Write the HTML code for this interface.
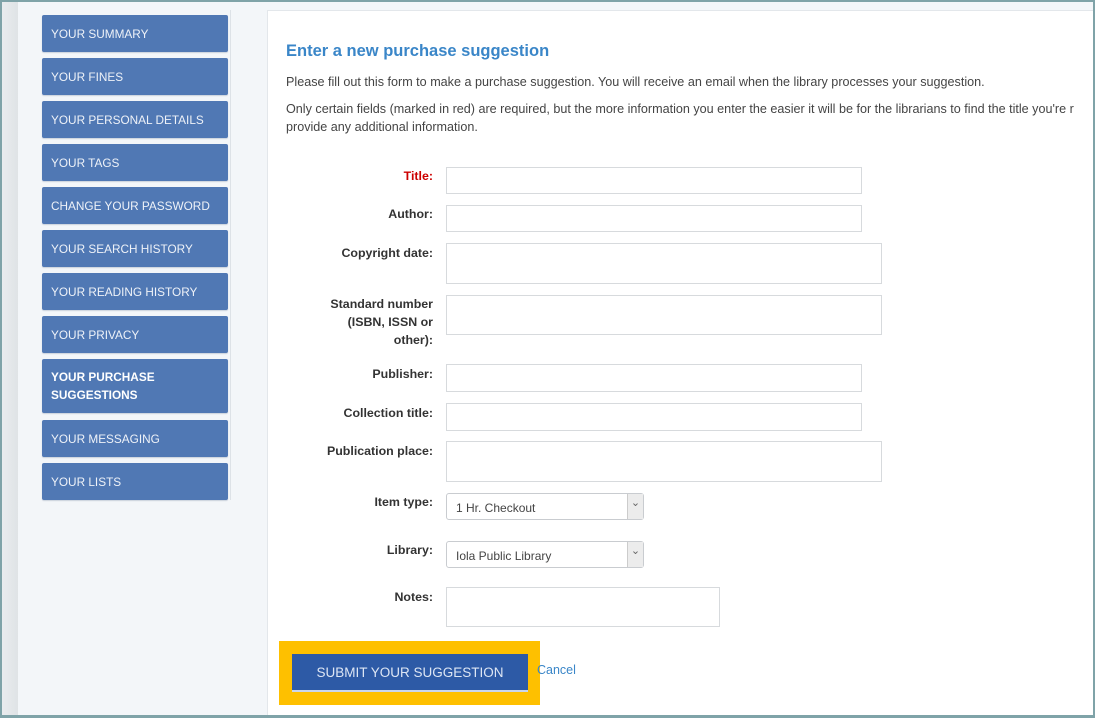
<!DOCTYPE html>
<html><head><style>
*{box-sizing:border-box;margin:0;padding:0}
body{width:1095px;height:718px;overflow:hidden;background:#7fa3a8;font-family:"Liberation Sans",sans-serif;position:relative}
.frame{position:absolute;left:2px;top:2px;width:1091px;height:713px;background:#f3f6f9;overflow:hidden}
.strip{position:absolute;left:0;top:0;width:16px;height:713px;background:linear-gradient(90deg,#e9ecee,#dfe3e6)}
.nav{position:absolute;left:40px;width:186px;background:#5078b4;color:#eef2f8;font-size:11.8px;padding-left:9px;display:flex;align-items:center;border-radius:2px;box-shadow:0 1px 1px #c9d1dc}
.vline{position:absolute;left:228px;top:8px;width:1px;height:490px;background:#dde2e7}
.panel{position:absolute;left:265px;top:8px;width:830px;height:710px;background:#fff;border-left:1px solid #e3e7eb;border-top:1px solid #e3e7eb}
h1{position:absolute;left:284px;top:40px;font-size:16.5px;color:#3a86c8;font-weight:bold}
.p{position:absolute;left:284px;font-size:12.6px;color:#444;white-space:nowrap;line-height:17px}
.lbl{position:absolute;right:660px;font-size:12.4px;font-weight:bold;color:#333;text-align:right;line-height:18px}
.in{position:absolute;left:444px;border:1px solid #d7dadd;background:#fff}
.sel{position:absolute;left:444px;width:198px;height:27px;border:1px solid #c9ccd0;border-radius:3px;font-size:12px;color:#444;padding:7px 9px}
.sel:after{content:"⌄";position:absolute;right:0;top:0;width:15px;height:25px;background:#ececec;border-left:1px solid #ccc;font-size:11px;color:#666;text-align:center;line-height:18px}
</style></head><body>
<div class="frame">
<div class="strip"></div>
<div class="nav" style="top:13px;height:37px">YOUR SUMMARY</div>
<div class="nav" style="top:56px;height:37px">YOUR FINES</div>
<div class="nav" style="top:99px;height:37px">YOUR PERSONAL DETAILS</div>
<div class="nav" style="top:142px;height:37px">YOUR TAGS</div>
<div class="nav" style="top:185px;height:37px">CHANGE YOUR PASSWORD</div>
<div class="nav" style="top:228px;height:37px">YOUR SEARCH HISTORY</div>
<div class="nav" style="top:271px;height:37px">YOUR READING HISTORY</div>
<div class="nav" style="top:314px;height:37px">YOUR PRIVACY</div>
<div class="nav" style="top:357px;height:54px;font-weight:bold;line-height:18px;color:#fff">YOUR PURCHASE<br>SUGGESTIONS</div>
<div class="nav" style="top:418px;height:37px">YOUR MESSAGING</div>
<div class="nav" style="top:461px;height:37px">YOUR LISTS</div>
<div class="vline"></div>
<div class="panel"></div>
<h1>Enter a new purchase suggestion</h1>
<div class="p" style="top:72px">Please fill out this form to make a purchase suggestion. You will receive an email when the library processes your suggestion.</div>
<div class="p" style="top:99px">Only certain fields (marked in red) are required, but the more information you enter the easier it will be for the librarians to find the title you're r</div>
<div class="p" style="top:117px">provide any additional information.</div>

<div class="lbl" style="top:165px;color:#c00">Title:</div><div class="in" style="top:165px;width:416px;height:27px"></div>
<div class="lbl" style="top:203px">Author:</div><div class="in" style="top:203px;width:416px;height:27px"></div>
<div class="lbl" style="top:242px">Copyright date:</div><div class="in" style="top:241px;width:436px;height:41px"></div>
<div class="lbl" style="top:293px">Standard number<br>(ISBN, ISSN or<br>other):</div><div class="in" style="top:293px;width:436px;height:40px"></div>
<div class="lbl" style="top:363px">Publisher:</div><div class="in" style="top:362px;width:416px;height:28px"></div>
<div class="lbl" style="top:402px">Collection title:</div><div class="in" style="top:401px;width:416px;height:28px"></div>
<div class="lbl" style="top:440px">Publication place:</div><div class="in" style="top:439px;width:436px;height:41px"></div>
<div class="lbl" style="top:491px">Item type:</div><div class="sel" style="top:491px">1 Hr. Checkout</div>
<div class="lbl" style="top:539px">Library:</div><div class="sel" style="top:539px">Iola Public Library</div>
<div class="lbl" style="top:586px">Notes:</div><div class="in" style="top:585px;width:274px;height:40px"></div>
<div style="position:absolute;left:277px;top:639px;width:261px;height:64px;background:#fec000"></div>
<div style="position:absolute;left:290px;top:652px;width:236px;height:38px;background:#2d5aa6;border-bottom:2px solid #c9d6ee;color:#dde6f4;font-size:13.5px;text-align:center;line-height:37px">SUBMIT YOUR SUGGESTION</div>
<div style="position:absolute;left:535px;top:661px;font-size:12.5px;color:#3a86c8">Cancel</div>
</div>
</body></html>
